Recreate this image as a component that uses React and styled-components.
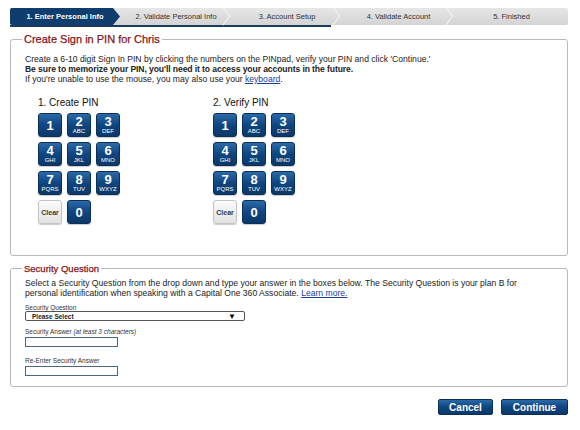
import styled, { createGlobalStyle } from "styled-components";

const Global = createGlobalStyle`
  body {
    margin: 0;
    background: #fff;
    font-family: "Liberation Sans", Arial, sans-serif;
    color: #222;
  }
`;

const Page = styled.div`
  width: 580px;
  height: 430px;
  padding: 8px 12px 0 10px;
  box-sizing: border-box;
  display: flex;
  flex-direction: column;
`;

const Stepper = styled.div`
  display: flex;
  height: 17px;
  background: linear-gradient(#e6e6e6, #d4d4d4);
  border-radius: 2px;
`;

const Step = styled.div`
  position: relative;
  flex: ${(p) => p.$grow};
  display: flex;
  align-items: center;
  justify-content: center;
  font-size: 7.5px;
  font-weight: ${(p) => (p.$active ? "bold" : "normal")};
  color: ${(p) => (p.$active ? "#fff" : "#333")};
  background: ${(p) => (p.$active ? "#0f3d6e" : "transparent")};
  clip-path: ${(p) =>
    p.$active
      ? "polygon(0 0, calc(100% - 7px) 0, 100% 50%, calc(100% - 7px) 100%, 0 100%)"
      : "none"};
  border-radius: ${(p) => (p.$active ? "2px 0 0 2px" : "0")};
  &::after {
    content: "";
    display: ${(p) => (p.$sep ? "block" : "none")};
    position: absolute;
    right: 3px;
    top: 2px;
    width: 11px;
    height: 11px;
    border-top: 1px solid #f4f4f4;
    border-right: 1px solid #f4f4f4;
    transform: rotate(45deg) skew(8deg, 8deg);
  }
`;

const Progress = styled.div`
  height: 2px;
  width: 57.5%;
  background: #173a5e;
`;

const Fieldset = styled.fieldset`
  margin: ${(p) => p.$top}px 0 0;
  padding: 0 14px;
  height: ${(p) => p.$h}px;
  box-sizing: border-box;
  border: 1px solid #b9b9b9;
  border-radius: 3px;
  min-width: 0;
`;

const Legend = styled.legend`
  padding: 0 2px;
  margin-left: -3px;
  font-size: ${(p) => p.$size}px;
  font-weight: normal;
  color: #86141b;
  -webkit-text-stroke: 0.25px #86141b;
`;

const Intro = styled.p`
  margin: ${(p) => p.$mt}px 0 0;
  font-size: 8.6px;
  line-height: 10px;
  color: #222;
`;

const Strong = styled.span`
  font-weight: bold;
  letter-spacing: -0.1px;
`;

const Link = styled.a`
  color: #1a3d9e;
  text-decoration: underline;
`;

const Pads = styled.div`
  display: flex;
  padding-left: 13px;
  margin-top: 12px;
`;

const PadColumn = styled.div`
  width: 175px;
  display: flex;
  flex-direction: column;
`;

const PadTitle = styled.div`
  font-size: 10px;
  color: #111;
  height: 13px;
  line-height: 13px;
  margin-bottom: 4px;
`;

const Keypad = styled.div`
  display: grid;
  grid-template-columns: repeat(3, 24px);
  grid-auto-rows: 24px;
  gap: 5px;
`;

const Key = styled.button`
  padding: 0;
  border-radius: 3px;
  border: 1px solid ${(p) => (p.$clear ? "#c4c4c4" : "#0b2f57")};
  background: ${(p) =>
    p.$clear
      ? "linear-gradient(#fbfbfb, #e2e2e2)"
      : "linear-gradient(#2a6aa8, #0f4580 50%, #0b3868)"};
  color: ${(p) => (p.$clear ? "#3a3a3a" : "#fff")};
  display: flex;
  flex-direction: column;
  align-items: center;
  justify-content: center;
  font-family: "Liberation Sans", Arial, sans-serif;
  font-weight: bold;
  font-size: 7px;
  line-height: 1;
  box-shadow: 0 1px 1px rgba(0, 0, 0, 0.2);
`;

const Digit = styled.span`
  font-size: 13px;
  line-height: 13px;
`;

const Letters = styled.span`
  font-size: 6px;
  font-weight: normal;
  line-height: 7px;
`;

const Label = styled.div`
  font-size: 6.5px;
  color: #333;
  margin-top: ${(p) => p.$mt}px;
  line-height: 8px;
`;

const Select = styled.div`
  width: 220px;
  height: 10px;
  box-sizing: border-box;
  border: 1px solid #555;
  border-radius: 2px;
  display: flex;
  align-items: center;
  justify-content: space-between;
  padding: 0 8px 0 6px;
  margin-top: -1px;
  font-size: 6.5px;
  font-weight: bold;
  color: #222;
`;

const Arrow = styled.span`
  font-size: 8px;
  color: #000;
`;

const Input = styled.input`
  display: block;
  width: 93px;
  height: 10px;
  box-sizing: border-box;
  border: 1px solid #4a6680;
  padding: 0;
  margin: 1px 0 0;
`;

const Actions = styled.div`
  display: flex;
  justify-content: flex-end;
  gap: 8px;
  margin-top: 12px;
`;

const ActionButton = styled.button`
  width: ${(p) => p.$w}px;
  height: 16px;
  padding: 0;
  border: 1px solid #0b2f57;
  border-radius: 2px;
  background: linear-gradient(#2a6aa8, #0f4580 50%, #0b3868);
  color: #fff;
  font-family: "Liberation Sans", Arial, sans-serif;
  font-weight: bold;
  font-size: 10px;
`;

const steps = [
  { label: "1. Enter Personal Info", grow: 110 },
  { label: "2. Validate Personal Info", grow: 112 },
  { label: "3. Account Setup", grow: 110 },
  { label: "4. Validate Account", grow: 113 },
  { label: "5. Finished", grow: 113 },
];

const keys = [
  ["1", ""],
  ["2", "ABC"],
  ["3", "DEF"],
  ["4", "GHI"],
  ["5", "JKL"],
  ["6", "MNO"],
  ["7", "PQRS"],
  ["8", "TUV"],
  ["9", "WXYZ"],
];

function Pad({ title }) {
  return (
    <PadColumn>
      <PadTitle>{title}</PadTitle>
      <Keypad>
        {keys.map(([d, l]) => (
          <Key key={d}>
            <Digit>{d}</Digit>
            {l && <Letters>{l}</Letters>}
          </Key>
        ))}
        <Key $clear>Clear</Key>
        <Key>
          <Digit>0</Digit>
        </Key>
      </Keypad>
    </PadColumn>
  );
}

export default function App() {
  return (
    <>
      <Global />
      <Page>
        <Stepper>
          {steps.map((s, i) => (
            <Step
              key={s.label}
              $grow={s.grow}
              $active={i === 0}
              $sep={i > 0 && i < steps.length - 1}
            >
              {s.label}
            </Step>
          ))}
        </Stepper>
        <Progress />

        <Fieldset $top={6} $h={223}>
          <Legend $size={11}>Create Sign in PIN for Chris</Legend>
          <Intro $mt={9}>
            Create a 6-10 digit Sign In PIN by clicking the numbers on the PINpad, verify your
            PIN and click 'Continue.'
            <br />
            <Strong>
              Be sure to memorize your PIN, you'll need it to access your accounts in the future.
            </Strong>
            <br />
            If you're unable to use the mouse, you may also use your <Link>keyboard</Link>.
          </Intro>
          <Pads>
            <Pad title="1. Create PIN" />
            <Pad title="2. Verify PIN" />
          </Pads>
        </Fieldset>

        <Fieldset $top={7} $h={124}>
          <Legend $size={9.5}>Security Question</Legend>
          <Intro $mt={4}>
            Select a Security Question from the drop down and type your answer in the boxes
            below. The Security Question is your plan B for
            <br />
            personal identification when speaking with a Capital One 360 Associate.{" "}
            <Link>Learn more.</Link>
          </Intro>
          <Label $mt={6}>Security Question</Label>
          <Select>
            Please Select
            <Arrow>▼</Arrow>
          </Select>
          <Label $mt={7}>
            Security Answer <i>(at least 3 characters)</i>
          </Label>
          <Input />
          <Label $mt={10}>Re-Enter Security Answer</Label>
          <Input />
        </Fieldset>

        <Actions>
          <ActionButton $w={55}>Cancel</ActionButton>
          <ActionButton $w={67}>Continue</ActionButton>
        </Actions>
      </Page>
    </>
  );
}
